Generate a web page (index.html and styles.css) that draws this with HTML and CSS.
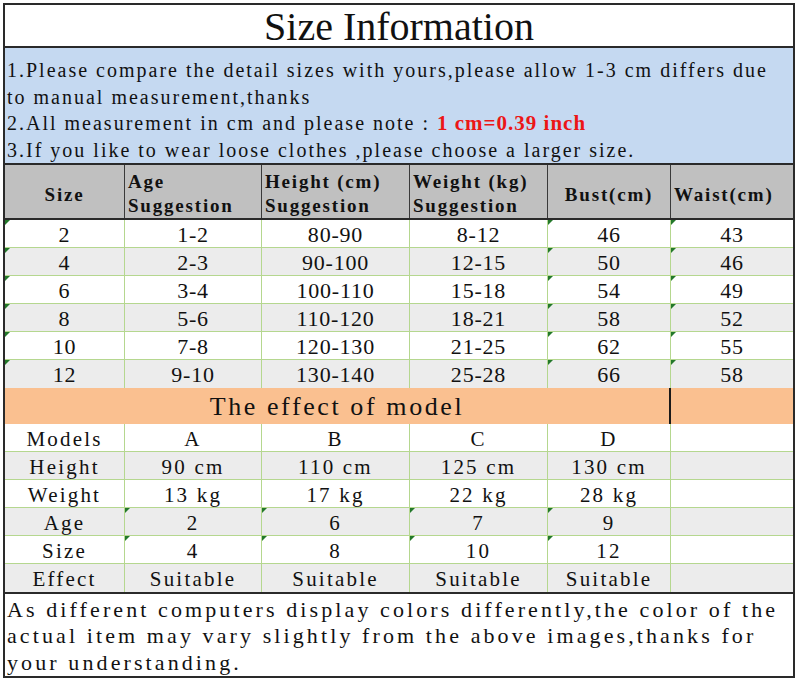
FILE: index.html
```html
<!DOCTYPE html>
<html lang="en">
<head>
<meta charset="utf-8">
<title>Size Information</title>
<link rel="stylesheet" href="styles.css">
</head>
<body>
<div class="sheet">
  <div class="title">Size Information</div>
  <div class="notes">
    <p>1.Please compare the detail sizes with yours,please allow 1-3 cm differs due<br>to manual measurement,thanks</p>
    <p>2.All measurement in cm and please note : <span class="red">1 cm=0.39 inch</span></p>
    <p>3.If you like to wear loose clothes ,please choose a larger size.</p>
  </div>
  <div class="row head">
    <div class="hc mid center">Size</div>
    <div class="hc">Age<br>Suggestion</div>
    <div class="hc">Height (cm)<br>Suggestion</div>
    <div class="hc">Weight (kg)<br>Suggestion</div>
    <div class="hc mid center">Bust(cm)</div>
    <div class="hc mid">Waist(cm)</div>
  </div>
  <div class="data">
    <div class="row"><div class="c tri">2</div><div class="c">1-2</div><div class="c">80-90</div><div class="c">8-12</div><div class="c tri">46</div><div class="c tri">43</div></div>
    <div class="row"><div class="c tri">4</div><div class="c">2-3</div><div class="c">90-100</div><div class="c">12-15</div><div class="c tri">50</div><div class="c tri">46</div></div>
    <div class="row"><div class="c tri">6</div><div class="c">3-4</div><div class="c">100-110</div><div class="c">15-18</div><div class="c tri">54</div><div class="c tri">49</div></div>
    <div class="row"><div class="c tri">8</div><div class="c">5-6</div><div class="c">110-120</div><div class="c">18-21</div><div class="c tri">58</div><div class="c tri">52</div></div>
    <div class="row"><div class="c tri">10</div><div class="c">7-8</div><div class="c">120-130</div><div class="c">21-25</div><div class="c tri">62</div><div class="c tri">55</div></div>
    <div class="row"><div class="c tri">12</div><div class="c">9-10</div><div class="c">130-140</div><div class="c">25-28</div><div class="c tri">66</div><div class="c tri">58</div></div>
  </div>
  <div class="row effect">
    <div class="ec">The effect of model</div>
    <div class="ec2"></div>
  </div>
  <div class="model">
    <div class="row"><div class="c">Models</div><div class="c">A</div><div class="c">B</div><div class="c">C</div><div class="c">D</div><div class="c"></div></div>
    <div class="row"><div class="c">Height</div><div class="c">90 cm</div><div class="c">110 cm</div><div class="c">125 cm</div><div class="c">130 cm</div><div class="c"></div></div>
    <div class="row"><div class="c">Weight</div><div class="c">13 kg</div><div class="c">17 kg</div><div class="c">22 kg</div><div class="c">28 kg</div><div class="c"></div></div>
    <div class="row"><div class="c">Age</div><div class="c tri">2</div><div class="c tri">6</div><div class="c tri">7</div><div class="c tri">9</div><div class="c"></div></div>
    <div class="row"><div class="c">Size</div><div class="c tri">4</div><div class="c tri">8</div><div class="c tri">10</div><div class="c tri">12</div><div class="c"></div></div>
    <div class="row"><div class="c">Effect</div><div class="c">Suitable</div><div class="c">Suitable</div><div class="c">Suitable</div><div class="c">Suitable</div><div class="c"></div></div>
  </div>
  <div class="footer">As different computers display colors differently,the color of the<br>actual item may vary slightly from the above images,thanks for<br>your understanding.</div>
</div>
</body>
</html>
```

FILE: styles.css
```css
* { box-sizing: border-box; }

html, body {
  margin: 0;
  padding: 0;
  background: #ffffff;
}

body {
  color: #111111;
  font-family: "Liberation Serif", "Times New Roman", serif;
}

.sheet {
  margin: 3px 0 0 3px;
  width: 792px;
  border: 2px solid #2a2a2a;
  background: #ffffff;
}

.title {
  height: 43px;
  padding-top: 2px;
  border-bottom: 2px solid #2a2a2a;
  text-align: center;
  font-size: 40px;
  line-height: 39px;
  color: #111111;
}

.notes {
  height: 117px;
  padding: 9px 0 0 2px;
  background: #c5d9f1;
  border-bottom: 2px solid #2a2a2a;
  font-size: 20px;
  letter-spacing: 2px;
  line-height: 26.5px;
  white-space: nowrap;
}

.notes p {
  margin: 0;
}

.red {
  color: #ec1616;
  font-weight: bold;
  font-size: 21px;
  letter-spacing: 1px;
  line-height: 26.5px;
}

.row {
  display: grid;
  grid-template-columns: 120px 137px 148px 138px 123px 1fr;
}

.head {
  height: 55px;
  background: #c0c0c0;
  border-bottom: 2px solid #2a2a2a;
}

.hc {
  padding: 5px 0 0 3px;
  border-right: 1px solid #3a3a3a;
  font-weight: bold;
  font-size: 19px;
  letter-spacing: 1.8px;
  line-height: 24px;
  white-space: nowrap;
}

.hc:last-child {
  border-right: none;
}

.hc.mid {
  display: flex;
  align-items: center;
  padding-top: 7px;
}

.hc.center {
  justify-content: center;
  padding-left: 0;
}

.c {
  position: relative;
  height: 28px;
  padding-top: 3px;
  border-right: 1px solid #b5d78f;
  border-bottom: 1px solid #b5d78f;
  text-align: center;
  white-space: nowrap;
}

.c:last-child {
  border-right: none;
}

.data .c {
  font-size: 22px;
  letter-spacing: 0.8px;
  line-height: 24px;
}

.model .c {
  font-size: 21px;
  letter-spacing: 2.2px;
  line-height: 24px;
}

.data .row:nth-child(even),
.model .row:nth-child(even) {
  background: #ececec;
}

.data .row:last-child .c,
.model .row:last-child .c {
  border-bottom: none;
}

.tri::before {
  content: "";
  position: absolute;
  left: 0;
  top: 0;
  border-top: 5px solid #23782a;
  border-right: 5px solid transparent;
}

.effect {
  height: 36px;
  background: #fac090;
}

.ec {
  grid-column: 1 / 6;
  border-right: 2px solid #1a1a1a;
  padding-top: 4px;
  text-align: center;
  font-size: 26px;
  letter-spacing: 2.6px;
  line-height: 30px;
}

.footer {
  height: 84px;
  overflow: hidden;
  border-top: 2px solid #2a2a2a;
  padding: 3px 0 0 2px;
  font-size: 22px;
  letter-spacing: 3.1px;
  line-height: 26.3px;
  white-space: nowrap;
}
```
